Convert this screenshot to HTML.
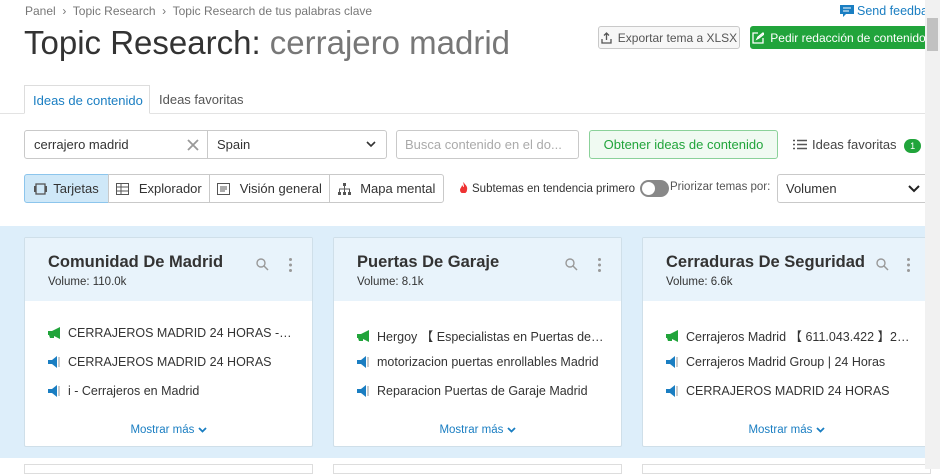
<!DOCTYPE html>
<html><head><meta charset="utf-8"><style>
*{box-sizing:border-box;margin:0;padding:0}
body{width:940px;height:469px;overflow:hidden;background:#fff;font-family:"Liberation Sans",sans-serif;color:#333;position:relative}
.a{position:absolute;white-space:nowrap}
.crumb{font-size:12px;color:#777;top:4px;left:25px}
h1{position:absolute;left:24px;top:24px;font-size:33px;font-weight:normal;color:#333;white-space:nowrap}
h1 span{color:#777}
.btn{position:absolute;border:1px solid #c9c9c9;border-radius:3px;font-size:13px;display:flex;align-items:center;justify-content:center;white-space:nowrap;gap:6px}
.sb{position:absolute;right:0;top:0;width:15px;height:469px;background:#f1f1f1}
.sb i{position:absolute;left:2px;top:18px;width:11px;height:33px;background:#c1c1c1}
.blue{position:absolute;left:0;top:226px;width:925px;height:232px;background:#ddeefa}
.card{position:absolute;top:237px;width:289px;height:210px;background:#fff;border:1px solid #cfdfe9;border-radius:2px;overflow:hidden}
.ch{height:63px;background:#e8f3fb;padding:15px 0 0 23px}
.ch b{font-weight:bold;font-size:16.5px;color:#333;display:block}
.ch small{font-size:11.5px;color:#333;display:block;margin-top:4px}
.li{position:absolute;left:22px;width:248px;font-size:12.5px;color:#333;display:flex;align-items:center;gap:7px;white-space:nowrap}
.li span{overflow:hidden;text-overflow:ellipsis}
.li svg{flex:none}
.more{position:absolute;top:186px;width:100%;text-align:center;font-size:11.5px;color:#1a7ec2}
.tool{position:absolute;top:20px}
</style></head><body>
<div class="a crumb">Panel &nbsp;›&nbsp; Topic Research &nbsp;›&nbsp; Topic Research de tus palabras clave</div>
<div class="a" style="left:840px;top:4px;font-size:12.5px;color:#1a7ec2"><svg width="14" height="13" style="vertical-align:-2px;margin-right:3px"><path d="M0 1h14v9H6l-3 3v-3H0z" fill="#1a7ec2"/><path d="M3 4h8M3 7h6" stroke="#fff"/></svg>Send feedback</div>
<h1>Topic Research: <span>cerrajero madrid</span></h1>
<div class="btn" style="left:598px;top:26px;width:142px;height:23px;background:#f7f7f7;color:#555;font-size:12px"><svg width="11" height="12"><path d="M5.5 1v7M3 3.5l2.5-2.5 2.5 2.5M1 7v4h9V7" stroke="#555" fill="none" stroke-width="1.3"/></svg>Exportar tema a XLSX</div>
<div class="btn" style="left:750px;top:26px;width:178px;height:23px;background:#21a43b;border-color:#21a43b;color:#fff;font-size:12px"><svg width="12" height="12"><path d="M6 1H1v10h10V6M5 7l1-2 5-4 1 1-5 4z" stroke="#fff" fill="none" stroke-width="1.3"/></svg>Pedir redacción de contenido</div>
<div style="position:absolute;left:0;top:113px;width:925px;border-top:1px solid #e3e3e3"></div>
<div class="a" style="left:24px;top:85px;width:126px;height:29px;border:1px solid #ddd;border-bottom:1px solid #fff;background:#fff;font-size:13px;color:#1a7ec2;padding:7px 0 0 8px">Ideas de contenido</div>
<div class="a" style="left:159px;top:92px;font-size:13px;color:#555">Ideas favoritas</div>
<div class="btn" style="left:24px;top:130px;width:184px;height:29px;justify-content:flex-start;padding-left:9px;border-radius:3px 0 0 3px">cerrajero madrid<svg width="12" height="12" style="position:absolute;right:8px"><path d="M1 1l10 10M11 1L1 11" stroke="#999" stroke-width="1.8"/></svg></div>
<div class="btn" style="left:207px;top:130px;width:180px;height:29px;justify-content:flex-start;padding-left:9px;border-radius:0 3px 3px 0">Spain<svg width="10" height="7" style="position:absolute;right:10px"><path d="M1 1l4 4 4-4" stroke="#333" fill="none" stroke-width="1.6"/></svg></div>
<div class="btn" style="left:396px;top:130px;width:183px;height:29px;justify-content:flex-start;padding-left:8px;color:#aaa">Busca contenido en el do...</div>
<div class="btn" style="left:589px;top:130px;width:189px;height:29px;background:#f0faf2;border-color:#8bd19a;color:#21a43b">Obtener ideas de contenido</div>
<div class="a" style="left:793px;top:137px;font-size:13px;color:#444"><svg width="14" height="11" style="vertical-align:-1px;margin-right:5px"><path d="M0 1.5h2M4 1.5h10M0 5.5h2M4 5.5h10M0 9.5h2M4 9.5h10" stroke="#555" stroke-width="1.5"/></svg>Ideas favoritas <span style="display:inline-block;width:17px;height:14px;border-radius:7px;background:#21a43b;color:#fff;font-size:9px;text-align:center;line-height:14px;margin-left:4px">1</span></div>
<div class="btn" style="left:24px;top:174px;width:85px;height:29px;background:#cfe8f8;border-color:#8cc5ec;border-radius:3px 0 0 3px"><svg width="13" height="12"><rect x="2" y="1" width="9" height="10" fill="none" stroke="#555" stroke-width="1.3"/><rect x="0" y="3" width="2" height="6" fill="#555"/><rect x="11" y="3" width="2" height="6" fill="#555"/></svg>Tarjetas</div>
<div class="btn" style="left:108px;top:174px;width:102px;height:29px;border-radius:0"><svg width="13" height="12"><rect x=".5" y=".5" width="12" height="11" fill="none" stroke="#555"/><path d="M.5 4h12M.5 8h12M5 .5v11" stroke="#555"/></svg>&nbsp;Explorador</div>
<div class="btn" style="left:209px;top:174px;width:121px;height:29px;border-radius:0"><svg width="13" height="12"><rect x=".5" y=".5" width="12" height="11" fill="none" stroke="#555"/><path d="M3 4h7M3 6h7M3 8h5" stroke="#555"/></svg>&nbsp;Visión general</div>
<div class="btn" style="left:329px;top:174px;width:115px;height:29px;border-radius:0 3px 3px 0"><svg width="13" height="12"><rect x="5" y="0" width="3" height="3" fill="#555"/><path d="M6.5 3v3M1.5 9V6h10v3M6.5 6v3" stroke="#555" fill="none"/><rect x="0" y="9" width="3" height="3" fill="#555"/><rect x="5" y="9" width="3" height="3" fill="#555"/><rect x="10" y="9" width="3" height="3" fill="#555"/></svg>&nbsp;Mapa mental</div>
<div class="a" style="left:459px;top:182px;font-size:11.5px;color:#333"><svg width="9" height="11" style="vertical-align:-1px;margin-right:4px"><path d="M4.5 0C6 3 9 4 8 8a3.5 3.5 0 0 1-7 0C1 6 3 5 3 3c1 1 1 2 2 2C5 3 4 1 4.5 0z" fill="#e33"/></svg>Subtemas en tendencia primero</div>
<div class="a" style="left:640px;top:180px;width:29px;height:17px;border-radius:9px;background:#888"><span style="position:absolute;left:2px;top:2px;width:13px;height:13px;border-radius:50%;background:#fff"></span></div>
<div class="a" style="left:670px;top:181px;font-size:11.5px;color:#555">Priorizar temas por:</div>
<div class="btn" style="left:777px;top:174px;width:152px;height:29px;justify-content:flex-start;padding-left:8px">Volumen<svg width="12" height="8" style="position:absolute;right:8px"><path d="M1 1l5 5 5-5" stroke="#222" fill="none" stroke-width="2"/></svg></div>
<div class="blue"></div>

<div class="card" style="left:24px"><div class="ch"><b>Comunidad De Madrid</b><small>Volume: 110.0k</small></div>
<svg class="tool" style="left:231px" width="13" height="13"><circle cx="5" cy="5" r="4" stroke="#999" fill="none" stroke-width="1.4"/><path d="M8 8l4 4" stroke="#999" stroke-width="1.5"/></svg><svg class="tool" style="left:264px" width="3" height="14"><circle cx="1.5" cy="1.5" r="1.5" fill="#999"/><circle cx="1.5" cy="7" r="1.5" fill="#999"/><circle cx="1.5" cy="12.5" r="1.5" fill="#999"/></svg>
<div class="li" style="top:88px"><svg width="14" height="12"><path d="M1 4h4l8-4v12l-8-4H1z" fill="#21a43b"/><path d="M2 8h5v3H3z" fill="#21a43b"/></svg><span>CERRAJEROS MADRID 24 HORAS - Centro</span></div>
<div class="li" style="top:117px"><svg width="14" height="12"><path d="M1 4h4l5-4v12l-5-4H1z" fill="#1a7ec2"/><rect x="11" y="1" width="2" height="10" fill="#ccc"/></svg><span>CERRAJEROS MADRID 24 HORAS</span></div>
<div class="li" style="top:146px"><svg width="14" height="12"><path d="M1 4h4l5-4v12l-5-4H1z" fill="#1a7ec2"/><rect x="11" y="1" width="2" height="10" fill="#ccc"/></svg><span>i - Cerrajeros en Madrid</span></div>
<div class="more">Mostrar más <svg width="9" height="6"><path d="M1 1l3.5 3.5L8 1" stroke="#1a7ec2" fill="none" stroke-width="1.8"/></svg></div></div>

<div class="card" style="left:333px"><div class="ch"><b>Puertas De Garaje</b><small>Volume: 8.1k</small></div>
<svg class="tool" style="left:231px" width="13" height="13"><circle cx="5" cy="5" r="4" stroke="#999" fill="none" stroke-width="1.4"/><path d="M8 8l4 4" stroke="#999" stroke-width="1.5"/></svg><svg class="tool" style="left:264px" width="3" height="14"><circle cx="1.5" cy="1.5" r="1.5" fill="#999"/><circle cx="1.5" cy="7" r="1.5" fill="#999"/><circle cx="1.5" cy="12.5" r="1.5" fill="#999"/></svg>
<div class="li" style="top:88px"><svg width="14" height="12"><path d="M1 4h4l8-4v12l-8-4H1z" fill="#21a43b"/><path d="M2 8h5v3H3z" fill="#21a43b"/></svg><span>Hergoy 【 Especialistas en Puertas de t...</span></div>
<div class="li" style="top:117px"><svg width="14" height="12"><path d="M1 4h4l5-4v12l-5-4H1z" fill="#1a7ec2"/><rect x="11" y="1" width="2" height="10" fill="#ccc"/></svg><span>motorizacion puertas enrollables Madrid</span></div>
<div class="li" style="top:146px"><svg width="14" height="12"><path d="M1 4h4l5-4v12l-5-4H1z" fill="#1a7ec2"/><rect x="11" y="1" width="2" height="10" fill="#ccc"/></svg><span>Reparacion Puertas de Garaje Madrid</span></div>
<div class="more">Mostrar más <svg width="9" height="6"><path d="M1 1l3.5 3.5L8 1" stroke="#1a7ec2" fill="none" stroke-width="1.8"/></svg></div></div>

<div class="card" style="left:642px"><div class="ch"><b>Cerraduras De Seguridad</b><small>Volume: 6.6k</small></div>
<svg class="tool" style="left:233px" width="13" height="13"><circle cx="5" cy="5" r="4" stroke="#999" fill="none" stroke-width="1.4"/><path d="M8 8l4 4" stroke="#999" stroke-width="1.5"/></svg><svg class="tool" style="left:264px" width="3" height="14"><circle cx="1.5" cy="1.5" r="1.5" fill="#999"/><circle cx="1.5" cy="7" r="1.5" fill="#999"/><circle cx="1.5" cy="12.5" r="1.5" fill="#999"/></svg>
<div class="li" style="top:88px"><svg width="14" height="12"><path d="M1 4h4l8-4v12l-8-4H1z" fill="#21a43b"/><path d="M2 8h5v3H3z" fill="#21a43b"/></svg><span>Cerrajeros Madrid 【 611.043.422 】24 ...</span></div>
<div class="li" style="top:117px"><svg width="14" height="12"><path d="M1 4h4l5-4v12l-5-4H1z" fill="#1a7ec2"/><rect x="11" y="1" width="2" height="10" fill="#ccc"/></svg><span>Cerrajeros Madrid Group | 24 Horas</span></div>
<div class="li" style="top:146px"><svg width="14" height="12"><path d="M1 4h4l5-4v12l-5-4H1z" fill="#1a7ec2"/><rect x="11" y="1" width="2" height="10" fill="#ccc"/></svg><span>CERRAJEROS MADRID 24 HORAS</span></div>
<div class="more">Mostrar más <svg width="9" height="6"><path d="M1 1l3.5 3.5L8 1" stroke="#1a7ec2" fill="none" stroke-width="1.8"/></svg></div></div>

<div class="a" style="left:24px;top:464px;width:289px;height:10px;border:1px solid #ddd"></div>
<div class="a" style="left:333px;top:464px;width:289px;height:10px;border:1px solid #ddd"></div>
<div class="a" style="left:642px;top:464px;width:289px;height:10px;border:1px solid #ddd"></div>
<div class="sb"><i></i></div>
</body></html>
